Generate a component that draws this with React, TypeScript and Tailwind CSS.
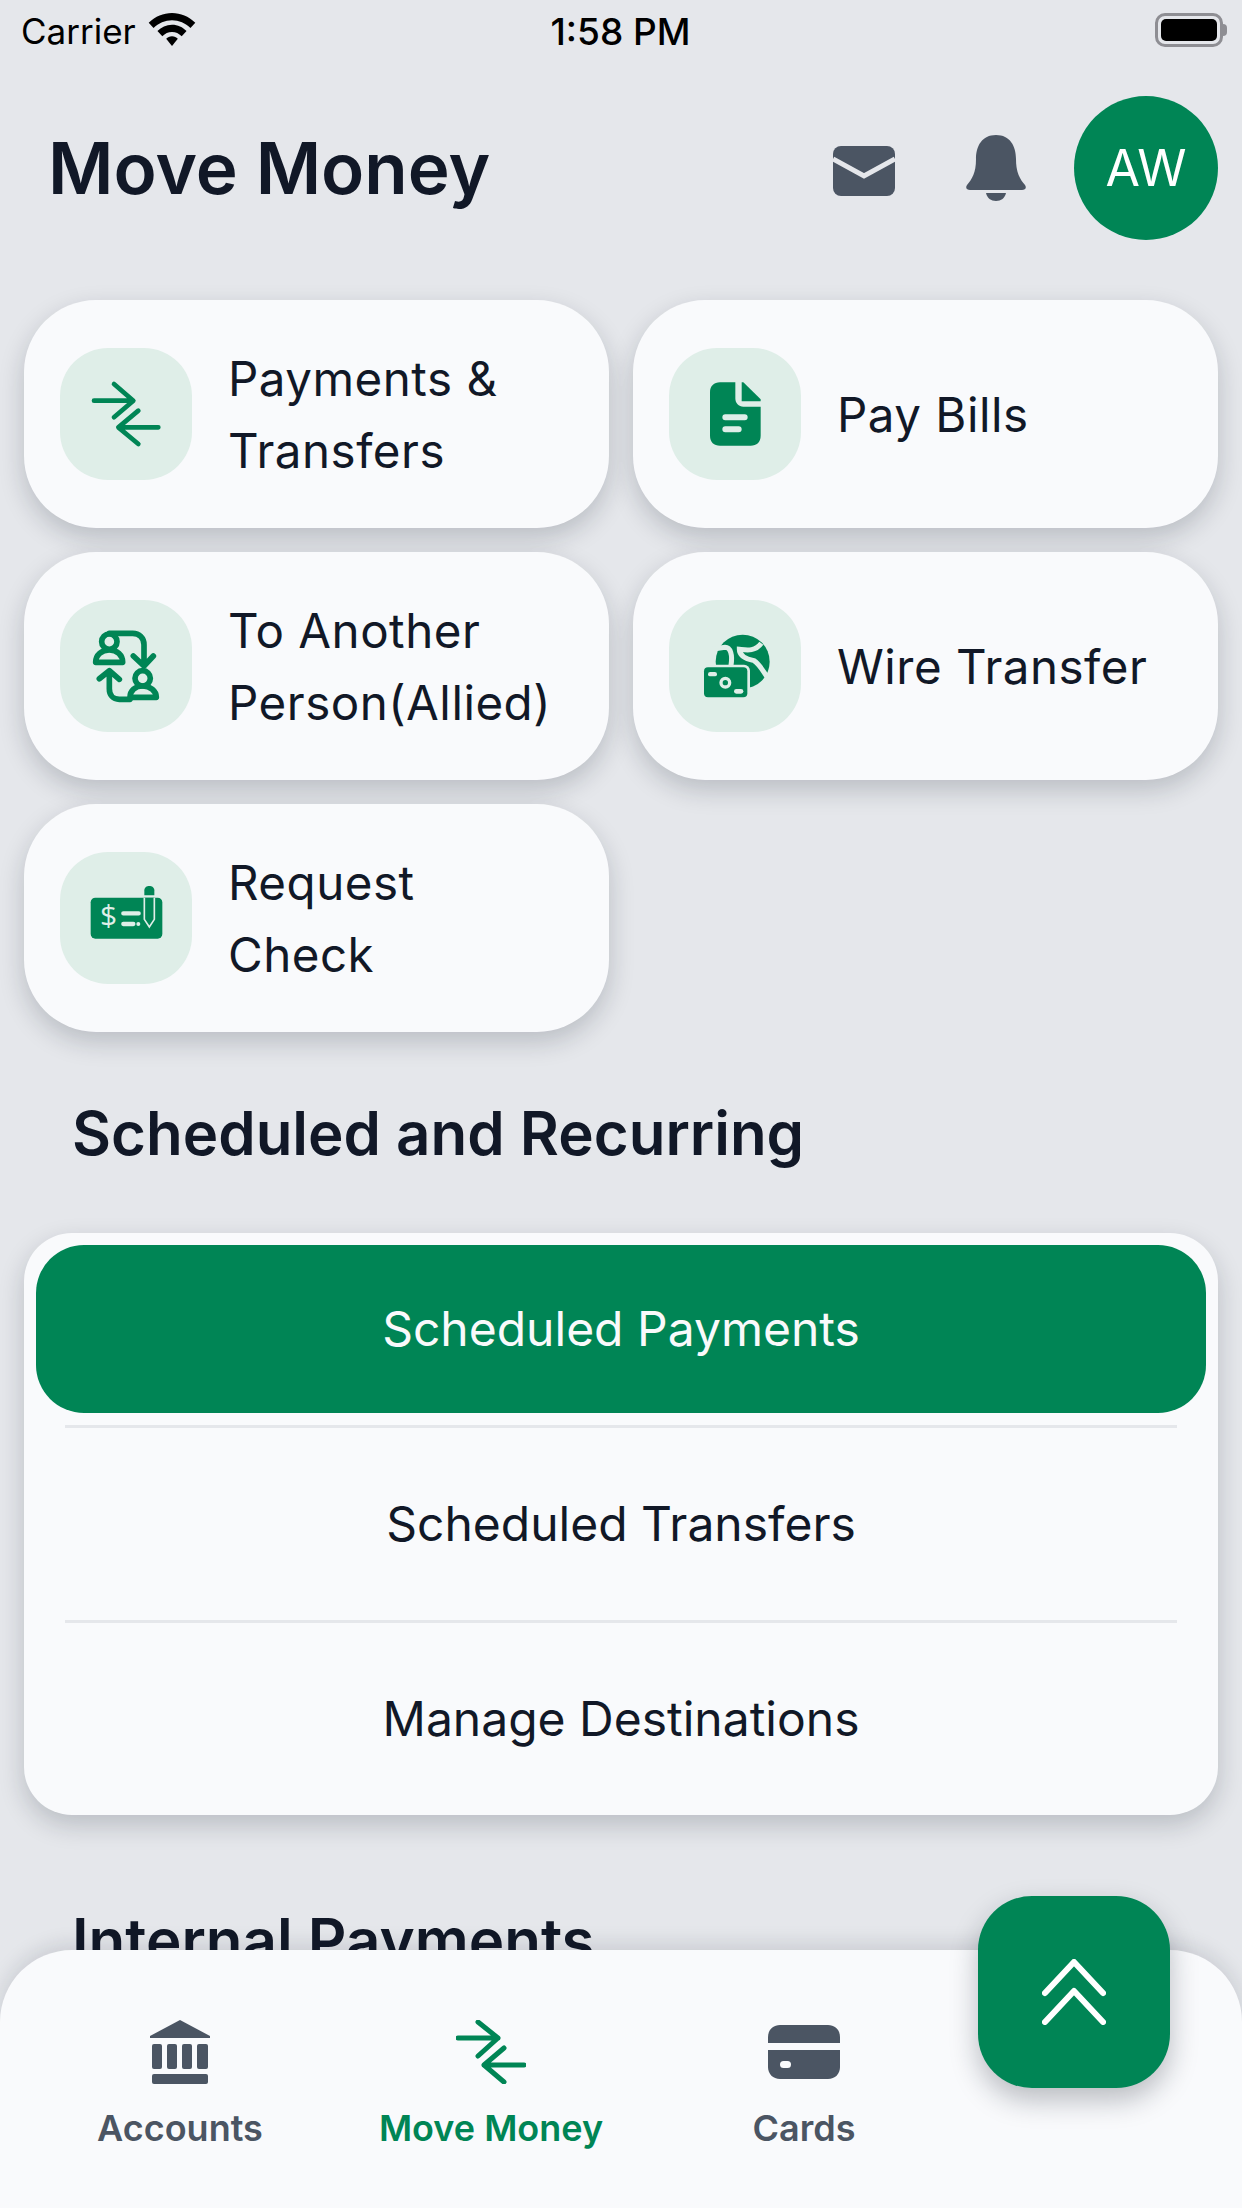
import type { ReactNode } from "react";

const GREEN = "#008555";
const TINT = "#dfeee8";

function TransferArrows() {
  return (
    <svg viewBox="30 24 396 396" className="w-full h-full" fill="none" stroke={GREEN} strokeWidth="14" strokeLinecap="round" strokeLinejoin="round">
      <path d="M132 182H248M192 132L250 182L192 232" />
      <path d="M325 262H207M265 212L205 262L265 312" />
    </svg>
  );
}

function PeopleSwap() {
  return (
    <svg viewBox="30 30 396 396" className="w-full h-full" fill="none" stroke={GREEN} strokeWidth="17" strokeLinecap="round" strokeLinejoin="round">
      <circle cx="178" cy="155" r="23" />
      <path d="M137 217C137 195 155 180 178 180C201 180 218 195 218 217Z" />
      <path d="M178 130H248C268 130 282 144 282 164V222M250 198L282 228L310 198" />
      <circle cx="278" cy="265" r="23" />
      <path d="M240 322C240 302 256 288 278 288C300 288 319 302 319 322Z" />
      <path d="M240 328H208C188 328 178 314 178 296V246M148 266L178 242L208 268" />
    </svg>
  );
}

function WireGlobe() {
  return (
    <svg viewBox="27 30 396 396" className="w-full h-full" fill="none">
      <circle cx="248" cy="215" r="81" fill={GREEN} />
      <path d="M155 178L195 172C212 172 218 195 213 226" stroke={TINT} strokeWidth="15" />
      <path d="M304 160C285 186 258 180 238 178C238 200 262 208 282 212C300 224 310 245 322 262" stroke={TINT} strokeWidth="15" />
      <rect x="124" y="224" width="146" height="106" rx="18" fill={TINT} />
      <path d="M270 290L278 330H200V290Z" fill={TINT} />
      <rect x="132" y="232" width="130" height="90" rx="12" fill={GREEN} />
      <rect x="144" y="246" width="27" height="13" rx="6.5" fill={TINT} />
      <rect x="222" y="297" width="28" height="14" rx="7" fill={TINT} />
      <circle cx="196" cy="278" r="13" stroke={TINT} strokeWidth="10" />
    </svg>
  );
}

function CheckPen() {
  return (
    <svg viewBox="30 20 396 396" className="w-full h-full" fill="none">
      <rect x="122" y="157" width="215" height="123" rx="14" fill={GREEN} />
      <text x="176" y="243" textAnchor="middle" fill={TINT} fontSize="90" fontWeight="500" fontFamily="'Open Sans', sans-serif">$</text>
      <path d="M220 204H266M220 236H250" stroke={TINT} strokeWidth="13" strokeLinecap="round" />
      <circle cx="265" cy="236" r="6" fill={TINT} />
      <path d="M283 135C283 118 313 118 313 135V150H283Z" fill={GREEN} />
      <path d="M283 157V222L298 245L313 222V157" fill={GREEN} stroke={TINT} strokeWidth="5" />
    </svg>
  );
}

function BillDoc() {
  return (
    <svg viewBox="27 24 396 396" className="w-full h-full" fill="none">
      <path d="M180 127H226V175C226 190 236 200 250 200H302V287C302 306 290 317 272 317H180C162 317 150 306 150 287V157C150 138 162 127 180 127Z" fill={GREEN} />
      <path d="M245 127H250L302 178V184H245Z" fill={GREEN} />
      <path d="M196 232H254M196 268H236" stroke={TINT} strokeWidth="18" strokeLinecap="round" />
    </svg>
  );
}

function ActionCard({ icon, lines }: { icon: ReactNode; lines: string[] }) {
  return (
    <button className="h-[228px] rounded-[72px] bg-[#f9fafc] shadow-[0_10px_26px_rgba(17,24,39,0.2)] flex items-center pl-[36px] text-left">
      <div className="w-[132px] h-[132px] rounded-[48px] bg-[#dfeee8] shrink-0">{icon}</div>
      <div className="ml-[36px] pt-[1px] text-[47.5px] leading-[72px] tracking-[0.5px] text-[#111827]">
        {lines.map((line) => (
          <div key={line}>{line}</div>
        ))}
      </div>
    </button>
  );
}

function TabItem({ icon, label, active }: { icon: ReactNode; label: string; active?: boolean }) {
  return (
    <div className={`flex flex-col items-center ${active ? "text-[#008555]" : "text-[#4b5563]"}`}>
      <div className="h-[64px] flex items-center justify-center">{icon}</div>
      <span className="mt-[22px] text-[36px] leading-[44px] font-semibold">{label}</span>
    </div>
  );
}

export default function App() {
  return (
    <div className="relative w-[1242px] h-[2208px] overflow-hidden bg-[#e5e7eb] font-['Inter',sans-serif] text-[#111827]">
      {/* Status bar */}
      <div className="h-[60px] grid grid-cols-3 items-center pl-[21px] pr-[14px] text-[35px] text-black">
        <div className="flex items-center gap-[12px] pt-[3px]">
          <span>Carrier</span>
          <svg className="-mt-[4px]" width="48" height="33" viewBox="0 0 48 34" fill="currentColor">
            <path d="M24 0C15 0 7 3.500 0 10L5 15.500C10 10.500 17 7.500 24 7.500C31 7.500 38 10.500 43 15.500L48 10C41 3.500 33 0 24 0Z" />
            <path d="M24 12C18 12 13 14.500 9 18.500L14 24C17 21 20 19.500 24 19.500C28 19.500 31 21 34 24L39 18.500C35 14.500 30 12 24 12Z" />
            <path d="M24 24C21.500 24 19.500 25 18 26.500L24 34L30 26.500C28.500 25 26.500 24 24 24Z" />
          </svg>
        </div>
        <span className="text-center text-[37px] font-medium pt-[3px] pr-[8px]">1:58 PM</span>
        <div className="flex items-center justify-end mr-[1px]">
          <div className="w-[68px] h-[34px] rounded-[10px] border-[3px] border-[#8e8e93] p-[3px]">
            <div className="w-full h-full rounded-[5px] bg-black" />
          </div>
          <div className="w-[4px] h-[12px] rounded-r-full bg-[#8e8e93]" />
        </div>
      </div>

      {/* Header */}
      <div className="mt-[36px] h-[144px] flex items-center pl-[48px] pr-[24px]">
        <h1 className="text-[71px] leading-[80px] font-semibold">Move Money</h1>
        <div className="ml-auto flex items-center">
          <svg className="mt-[6px]" width="62" height="50" viewBox="0 0 62 50">
            <rect width="62" height="50" rx="8" fill="#4b5563" />
            <path d="M0 13L31 30L62 13" fill="none" stroke="#e5e7eb" strokeWidth="5" />
          </svg>
          <svg className="ml-[71px]" width="60" height="66" viewBox="0 0 60 66" fill="#4b5563">
            <path d="M30 0C16 0 10 11 10 24C10 38 6 44 1 50C-1 53 1 55 4 55H56C59 55 61 53 59 50C54 44 50 38 50 24C50 11 44 0 30 0Z" />
            <path d="M20 58H40C39 63 35 66 30 66C25 66 21 63 20 58Z" />
          </svg>
          <div className="ml-[48px] w-[144px] h-[144px] rounded-full bg-[#008555] flex items-center justify-center text-white text-[50px]">AW</div>
        </div>
      </div>

      {/* Quick actions */}
      <div className="mt-[60px] px-[24px] grid grid-cols-2 gap-[24px]">
        <ActionCard icon={<TransferArrows />} lines={["Payments &", "Transfers"]} />
        <ActionCard icon={<BillDoc />} lines={["Pay Bills"]} />
        <ActionCard icon={<PeopleSwap />} lines={["To Another", "Person(Allied)"]} />
        <ActionCard icon={<WireGlobe />} lines={["Wire Transfer"]} />
        <ActionCard icon={<CheckPen />} lines={["Request", "Check"]} />
      </div>

      {/* Scheduled and Recurring */}
      <h2 className="mt-[61px] pl-[72px] text-[60px] leading-[80px] font-semibold">Scheduled and Recurring</h2>
      <div className="mt-[60px] mx-[24px] h-[582px] rounded-[48px] bg-[#f9fafc] shadow-[0_10px_26px_rgba(17,24,39,0.2)] p-[12px] text-[48px]">
        <div className="h-[168px] rounded-[48px] bg-[#008555] text-[#f9fafb] flex items-center justify-center">Scheduled Payments</div>
        <div className="mt-[12px] mx-[29px] h-[3px] bg-[#e5e7eb]" />
        <div className="h-[192px] flex items-center justify-center">Scheduled Transfers</div>
        <div className="mx-[29px] h-[3px] bg-[#e5e7eb]" />
        <div className="h-[192px] flex items-center justify-center">Manage Destinations</div>
      </div>

      <h2 className="mt-[85px] pl-[72px] text-[60px] leading-[80px] font-semibold">Internal Payments</h2>

      {/* Bottom tab bar */}
      <div className="absolute left-0 right-0 bottom-0 h-[258px] rounded-t-[72px] bg-[#f9fafc] shadow-[0_-6px_20px_rgba(17,24,39,0.12)] flex items-start pt-[70px]">
        <div className="w-[360px] flex justify-center">
          <TabItem
            label="Accounts"
            icon={
              <svg width="60" height="64" viewBox="0 0 60 64" fill="currentColor">
                <path d="M0 18H60V16L30 0L0 16Z" />
                <rect x="2" y="24" width="10" height="25" rx="2" />
                <rect x="17" y="24" width="10" height="25" rx="2" />
                <rect x="32" y="24" width="10" height="25" rx="2" />
                <rect x="47" y="24" width="11" height="25" rx="2" />
                <rect x="2" y="54" width="56" height="10" rx="2" />
              </svg>
            }
          />
        </div>
        <div className="w-[262px] flex justify-center">
          <TabItem
            active
            label="Move Money"
            icon={
              <svg width="70" height="64" viewBox="0 0 70 64" fill="none" stroke="currentColor" strokeWidth="5" strokeLinecap="round" strokeLinejoin="round">
                <path d="M2 18H42M22 2L42 18L22 36" />
                <path d="M68 45H28M48 28L28 45L48 62" />
              </svg>
            }
          />
        </div>
        <div className="w-[364px] flex justify-center">
          <TabItem
            label="Cards"
            icon={
              <svg width="72" height="54" viewBox="0 0 72 54" fill="currentColor">
                <path d="M12 0H60C67 0 72 5 72 12V18H0V12C0 5 5 0 12 0Z" />
                <path d="M0 25H72V42C72 49 67 54 60 54H12C5 54 0 49 0 42Z" />
                <rect x="12" y="36" width="11" height="7" rx="3.500" fill="#f9fafc" />
              </svg>
            }
          />
        </div>
      </div>

      {/* Floating button */}
      <button className="absolute left-[978px] top-[1896px] w-[192px] h-[192px] rounded-[54px] bg-[#008555] shadow-[0_12px_28px_rgba(17,24,39,0.28)] flex items-center justify-center">
        <svg width="64" height="66" viewBox="0 0 64 66" fill="none" stroke="white" strokeWidth="6" strokeLinecap="round" strokeLinejoin="round">
          <path d="M3 34L32 3L61 34" />
          <path d="M3 63L32 32L61 63" />
        </svg>
      </button>
    </div>
  );
}
